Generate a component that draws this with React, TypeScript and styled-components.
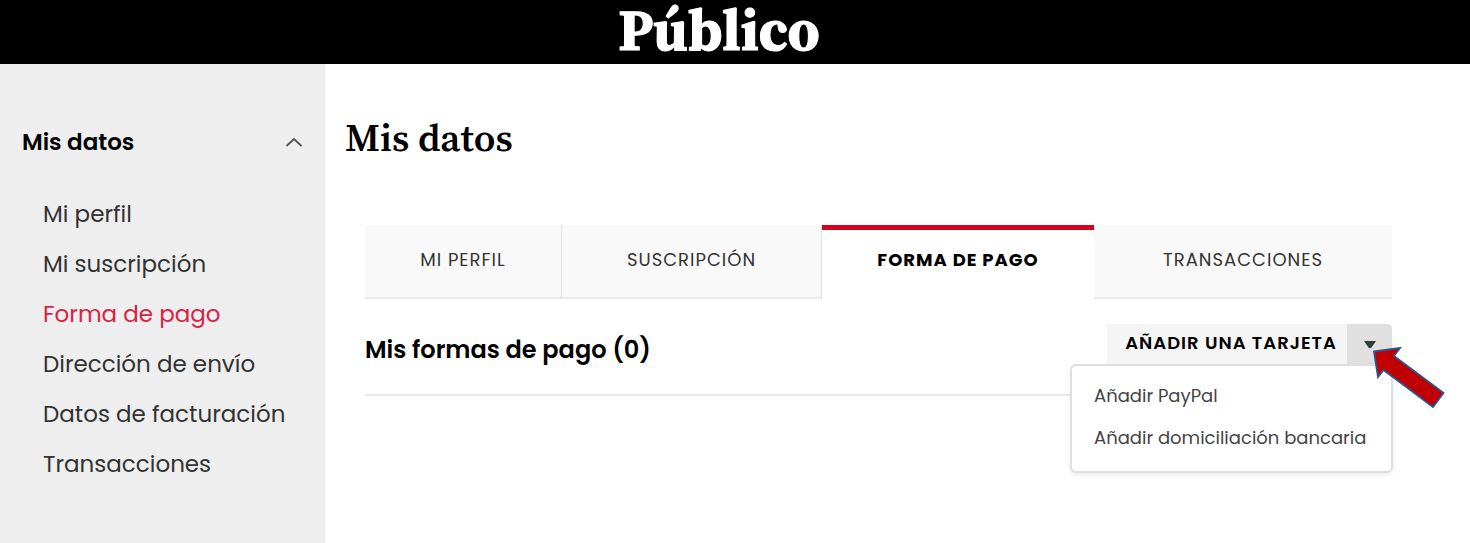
import React from "react";
import styled, { createGlobalStyle } from "styled-components";

const sans = `Poppins, Inter, "Open Sans", sans-serif`;
const serif = `"Source Serif Pro", "Source Serif 4", "Liberation Serif", serif`;

const GlobalStyle = createGlobalStyle`
  * { box-sizing: border-box; }
  body {
    margin: 0;
    background: #fff;
    color: #000;
    font-family: ${sans};
  }
  a { color: inherit; text-decoration: none; }
  button { font: inherit; border: 0; cursor: pointer; }
`;

const Page = styled.div`
  min-height: 100vh;
  display: flex;
  flex-direction: column;
`;

const TopBar = styled.header`
  height: 64px;
  background: #000;
  display: flex;
  justify-content: center;
  align-items: flex-start;
  padding-right: 32px;
`;

const Logo = styled.a`
  && { color: #fff; }
  display: block;
  font: 700 57px/60px ${serif};
  -webkit-text-stroke: 1px #fff;
`;

const Body = styled.div`
  flex: 1;
  display: flex;
`;

const Sidebar = styled.nav`
  flex: 0 0 325px;
  background: #eee;
  padding: 60px 22px 40px;
`;

const GroupToggle = styled.button`
  width: 100%;
  display: flex;
  align-items: center;
  justify-content: space-between;
  padding: 0;
  background: none;
  color: #000;
  font-size: 23px;
  line-height: 36px;
  font-weight: 600;
`;

const SideList = styled.ul`
  list-style: none;
  margin: 29px 0 0;
  padding: 0 0 0 21px;
`;

const SideLink = styled.a<{ $active?: boolean }>`
  && { color: ${(p) => (p.$active ? "#db2145" : "#333")}; }
  display: block;
  font-size: 23px;
  line-height: 50px;
  white-space: nowrap;
`;

const Main = styled.main`
  flex: 1;
  min-width: 0;
  padding: 52px 78px 40px 20px;
`;

const Title = styled.h1`
  margin: 0;
  font: 600 39px/44px ${serif};
`;

const Panel = styled.div`
  margin: 65px 0 0 20px;
`;

const Tabs = styled.nav`
  display: grid;
  grid-template-columns: 197fr 260fr 272fr 298fr;
`;

const Tab = styled.a<{ $active?: boolean; $divided?: boolean }>`
  height: 74px;
  display: flex;
  align-items: center;
  justify-content: center;
  padding-bottom: 4px;
  font-size: 18px;
  line-height: 24px;
  letter-spacing: 1px;
  white-space: nowrap;
  font-weight: ${(p) => (p.$active ? 700 : 400)};
  && { color: ${(p) => (p.$active ? "#000" : "#333")}; }
  background: ${(p) => (p.$active ? "#fff" : "#f9f9f9")};
  box-shadow: ${(p) => (p.$active ? "inset 0 5px #d6001f" : "inset 0 -2px #e9e9e9")};
  border-right: ${(p) => (p.$divided ? "1px solid #e2e2e2" : "0")};
`;

const Section = styled.section`
  display: flex;
  justify-content: space-between;
  align-items: flex-start;
  height: 97px;
  padding-top: 25px;
  border-bottom: 2px solid #e9e9e9;
`;

const SectionTitle = styled.h2`
  margin: 0;
  font-size: 24px;
  line-height: 52px;
  font-weight: 600;
`;

const SplitButton = styled.div`
  position: relative;
  display: flex;
  height: 42px;
`;

const AddButton = styled.button`
  width: 240px;
  padding: 0 0 6px 8px;
  background: #f5f5f5;
  color: #000;
  font-size: 18px;
  font-weight: 600;
  letter-spacing: 1px;
  white-space: nowrap;
`;

const CaretButton = styled.button`
  width: 45px;
  padding: 0;
  display: flex;
  align-items: center;
  justify-content: center;
  background: #e0e0e0;
  border-radius: 0 4px 0 0;
`;

const Menu = styled.div`
  position: absolute;
  top: 40px;
  right: -1px;
  width: 323px;
  padding: 9px 0 12px;
  background: #fff;
  border: 2px solid #dddfe3;
  border-radius: 6px;
  box-shadow: 0 2px 4px rgba(0, 0, 0, 0.08);
`;

const MenuLink = styled.a`
  && { color: #444; }
  display: block;
  padding-left: 22px;
  font-size: 18px;
  line-height: 42px;
  white-space: nowrap;
`;

const Pointer = styled.svg`
  position: absolute;
  right: -60px;
  top: 20px;
`;

const sideItems = [
  "Mi perfil",
  "Mi suscripción",
  "Forma de pago",
  "Dirección de envío",
  "Datos de facturación",
  "Transacciones",
];

export default function App() {
  return (
    <Page>
      <GlobalStyle />
      <TopBar>
        <Logo href="#">Público</Logo>
      </TopBar>
      <Body>
        <Sidebar aria-label="Cuenta">
          <GroupToggle type="button" aria-expanded="true">
            Mis datos
            <svg width="18" height="12" viewBox="0 0 18 12" fill="none" stroke="#555" strokeWidth="1.8" aria-hidden="true">
              <path d="M1.5 10 9 3 16.5 10" />
            </svg>
          </GroupToggle>
          <SideList>
            {sideItems.map((item) => (
              <li key={item}>
                <SideLink href="#" $active={item === "Forma de pago"}>{item}</SideLink>
              </li>
            ))}
          </SideList>
        </Sidebar>
        <Main>
          <Title>Mis datos</Title>
          <Panel>
            <Tabs aria-label="Mis datos">
              <Tab href="#" $divided>MI PERFIL</Tab>
              <Tab href="#" $divided>SUSCRIPCIÓN</Tab>
              <Tab href="#" $active aria-current="page">FORMA DE PAGO</Tab>
              <Tab href="#">TRANSACCIONES</Tab>
            </Tabs>
            <Section>
              <SectionTitle>Mis formas de pago (0)</SectionTitle>
              <SplitButton>
                <AddButton type="button">AÑADIR UNA TARJETA</AddButton>
                <CaretButton type="button" aria-label="Más opciones" aria-expanded="true">
                  <svg width="12" height="8" viewBox="0 0 12 8" aria-hidden="true">
                    <path d="M0 0H12L7.5 6.4Q6 8 4.5 6.4Z" fill="#2f3d3b" />
                  </svg>
                </CaretButton>
                <Menu>
                  <MenuLink href="#">Añadir PayPal</MenuLink>
                  <MenuLink href="#">Añadir domiciliación bancaria</MenuLink>
                </Menu>
                <Pointer width="80" height="68" viewBox="0 0 80 68" aria-hidden="true">
                  <path
                    d="M2 7.5 28 4 22 12 71.5 49 61 63 11.5 26 6 33Z"
                    fill="#c00000"
                    stroke="#2f528f"
                    strokeWidth="1.8"
                  />
                </Pointer>
              </SplitButton>
            </Section>
          </Panel>
        </Main>
      </Body>
    </Page>
  );
}
